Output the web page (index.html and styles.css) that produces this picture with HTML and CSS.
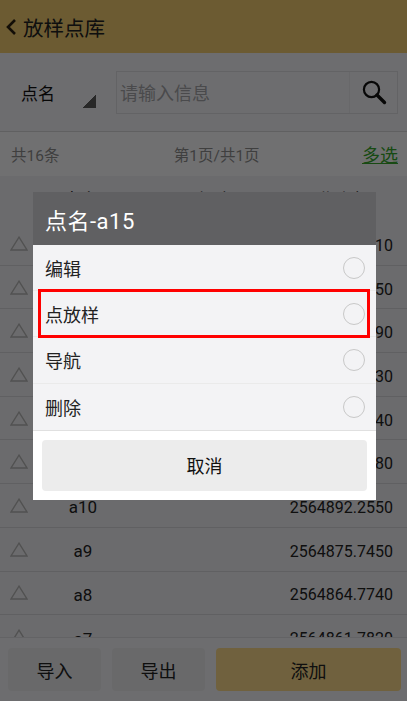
FILE: index.html
```html
<!DOCTYPE html>
<html lang="zh-CN">
<head>
    <meta charset="UTF-8">
    <title>放样点库</title>
    <link rel="stylesheet" href="styles.css">
</head>
<body>
    <div class="page">
        <header class="top-bar">
            <svg class="back-icon" width="12" height="18" viewBox="0 0 12 18"><path d="M10 2 L3 9 L10 16" fill="none" stroke="#2a2110" stroke-width="2.6"/></svg>
            <span>放样点库</span>
        </header>

        <div class="search-row">
            <div class="select-box">
                <span>点名</span>
                <i class="select-arrow"></i>
            </div>
            <div class="search-box">
                <span class="placeholder">请输入信息</span>
                <button class="search-btn">
                    <svg width="26" height="26" viewBox="0 0 26 26"><circle cx="10.5" cy="10.5" r="7.6" fill="none" stroke="#111" stroke-width="2.2"/><path d="M16 16 L23.5 23.5" stroke="#111" stroke-width="3.4" stroke-linecap="round"/></svg>
                </button>
            </div>
        </div>

        <div class="info-row">
            <span>共16条</span>
            <span class="page-count">第1页/共1页</span>
            <a class="multi-select">多选</a>
        </div>

        <div class="table">
            <div class="table-head">
                <span>点名</span>
                <span>经度</span>
                <span>北坐标</span>
            </div>
            <div class="table-row"><svg class="tri" viewBox="0 0 18 15"><path d="M9 1.2 L17 14 H1 Z"/></svg><span class="name">a15</span><span class="coord">2564931.2510</span></div>
            <div class="table-row"><svg class="tri" viewBox="0 0 18 15"><path d="M9 1.2 L17 14 H1 Z"/></svg><span class="name">a14</span><span class="coord">2564925.4650</span></div>
            <div class="table-row"><svg class="tri" viewBox="0 0 18 15"><path d="M9 1.2 L17 14 H1 Z"/></svg><span class="name">a13</span><span class="coord">2564918.3390</span></div>
            <div class="table-row"><svg class="tri" viewBox="0 0 18 15"><path d="M9 1.2 L17 14 H1 Z"/></svg><span class="name">a12</span><span class="coord">2564910.7130</span></div>
            <div class="table-row"><svg class="tri" viewBox="0 0 18 15"><path d="M9 1.2 L17 14 H1 Z"/></svg><span class="name">a11</span><span class="coord">2564905.1240</span></div>
            <div class="table-row"><svg class="tri" viewBox="0 0 18 15"><path d="M9 1.2 L17 14 H1 Z"/></svg><span class="name">a11</span><span class="coord">2564899.6280</span></div>
            <div class="table-row"><svg class="tri" viewBox="0 0 18 15"><path d="M9 1.2 L17 14 H1 Z"/></svg><span class="name">a10</span><span class="coord">2564892.2550</span></div>
            <div class="table-row"><svg class="tri" viewBox="0 0 18 15"><path d="M9 1.2 L17 14 H1 Z"/></svg><span class="name">a9</span><span class="coord">2564875.7450</span></div>
            <div class="table-row"><svg class="tri" viewBox="0 0 18 15"><path d="M9 1.2 L17 14 H1 Z"/></svg><span class="name">a8</span><span class="coord">2564864.7740</span></div>
            <div class="table-row"><svg class="tri" viewBox="0 0 18 15"><path d="M9 1.2 L17 14 H1 Z"/></svg><span class="name">a7</span><span class="coord">2564861.7820</span></div>
        </div>

        <footer class="bottom-bar">
            <button class="action-btn">导入</button>
            <button class="action-btn">导出</button>
            <button class="action-btn add-btn">添加</button>
        </footer>
    </div>

    <div class="mask"></div>

    <div class="dialog">
        <div class="dialog-title">点名-a15</div>
        <ul class="option-list">
            <li class="option"><span>编辑</span><i class="radio"></i></li>
            <li class="option"><span>点放样</span><i class="radio"></i></li>
            <li class="option"><span>导航</span><i class="radio"></i></li>
            <li class="option"><span>删除</span><i class="radio"></i></li>
        </ul>
        <div class="dialog-footer">
            <button class="cancel-btn">取消</button>
        </div>
    </div>

    <div class="highlight"></div>
</body>
</html>
```

FILE: styles.css
```css
* {
    margin: 0;
    padding: 0;
    box-sizing: border-box;
    font-family: Roboto, "Noto Sans CJK SC", sans-serif;
}

body {
    width: 407px;
    height: 701px;
    overflow: hidden;
    position: relative;
    background-color: #f2f2f6;
}

.page {
    height: 701px;
    display: flex;
    flex-direction: column;
    color: #222222;
}

.top-bar {
    height: 53px;
    flex: none;
    display: flex;
    align-items: center;
    gap: 6px;
    padding-left: 5px;
    background-color: #efca70;
    font-size: 20.5px;
}

.search-row {
    height: 79px;
    flex: none;
    display: flex;
    align-items: center;
    padding: 0 9px 0 21px;
    border-bottom: 1px solid #d4d4d8;
}

.select-box {
    width: 95px;
    height: 42px;
    flex: none;
    position: relative;
    display: flex;
    align-items: center;
    font-size: 17px;
    color: #111111;
}

.select-arrow {
    position: absolute;
    left: 61px;
    bottom: 5px;
    width: 14px;
    height: 14px;
    background: linear-gradient(135deg, transparent 50%, #5a5a5a 50%);
}

.search-box {
    flex: 1;
    height: 43px;
    display: flex;
    align-items: center;
    justify-content: space-between;
    border: 1px solid #dcdce0;
}

.placeholder {
    padding-left: 3px;
    font-size: 18px;
    color: #a4a4a8;
}

.search-btn {
    width: 48px;
    height: 41px;
    display: flex;
    align-items: center;
    justify-content: center;
    background: none;
    border: none;
    border-left: 1px solid #e6e6ea;
}

.info-row {
    height: 44px;
    flex: none;
    display: flex;
    align-items: center;
    justify-content: space-between;
    padding: 0 9px 0 11px;
    font-size: 15.5px;
    color: #8c8c8c;
    background-color: #f9f9fb;
}

.page-count {
    margin-left: 12px;
}

.multi-select {
    font-size: 18px;
    color: #35a52c;
    text-decoration: underline;
}

.table {
    flex: 1;
    overflow: hidden;
    background-color: #eeeef2;
}

.table-head {
    height: 46px;
    display: grid;
    grid-template-columns: 134px 120px 1fr;
    align-items: center;
    padding: 0 0 0 63px;
    font-size: 18px;
}

.table-row {
    height: 43.7px;
    display: flex;
    align-items: center;
    justify-content: space-between;
    padding: 4px 14px 0 10px;
    border-bottom: 1px solid #d6d6da;
    font-size: 17px;
}

.tri {
    width: 18px;
    height: 15px;
    flex: none;
    margin-bottom: 4px;
    fill: none;
    stroke: #b4b4b4;
    stroke-width: 1.4;
}

.name {
    width: 110px;
    text-align: center;
}

.coord {
    margin-left: auto;
    font-size: 16px;
}

.bottom-bar {
    height: 64px;
    flex: none;
    display: flex;
    gap: 11px;
    padding: 10px 6px 10px 8px;
    background-color: #f2f2f6;
    border-top: 1px solid #dcdce0;
}

.action-btn {
    width: 93px;
    border: none;
    border-radius: 4px;
    background-color: #e8e8ec;
    font-size: 18px;
    color: #222222;
}

.add-btn {
    flex: 1;
    background-color: #f8d88a;
}

.mask {
    position: absolute;
    top: 0;
    left: 0;
    width: 100%;
    height: 100%;
    background-color: rgba(0, 0, 0, 0.55);
}

.dialog {
    position: absolute;
    top: 192px;
    left: 33px;
    width: 343px;
    height: 308px;
    background-color: #ffffff;
}

.dialog-title {
    height: 53px;
    display: flex;
    align-items: center;
    padding-left: 12px;
    background-color: #606062;
    color: #ffffff;
    font-size: 22px;
    letter-spacing: 0.5px;
}

.option-list {
    list-style: none;
    background-color: #f3f3f5;
    border-bottom: 1px solid #e0e0e0;
}

.option {
    height: 46.2px;
    display: flex;
    align-items: center;
    justify-content: space-between;
    padding: 0 11px 0 12px;
    border-bottom: 1px solid #eaeaea;
    font-size: 18px;
    color: #222222;
}

.option:last-child {
    border-bottom: none;
}

.radio {
    width: 22px;
    height: 22px;
    border: 1px solid #c8c8c8;
    border-radius: 50%;
}

.dialog-footer {
    padding: 9px;
}

.cancel-btn {
    width: 100%;
    height: 51px;
    border: none;
    border-radius: 4px;
    background-color: #ececec;
    font-size: 18px;
    color: #111111;
}

.highlight {
    position: absolute;
    top: 289px;
    left: 38px;
    width: 332px;
    height: 49px;
    border: 3px solid #ff0000;
}
```
